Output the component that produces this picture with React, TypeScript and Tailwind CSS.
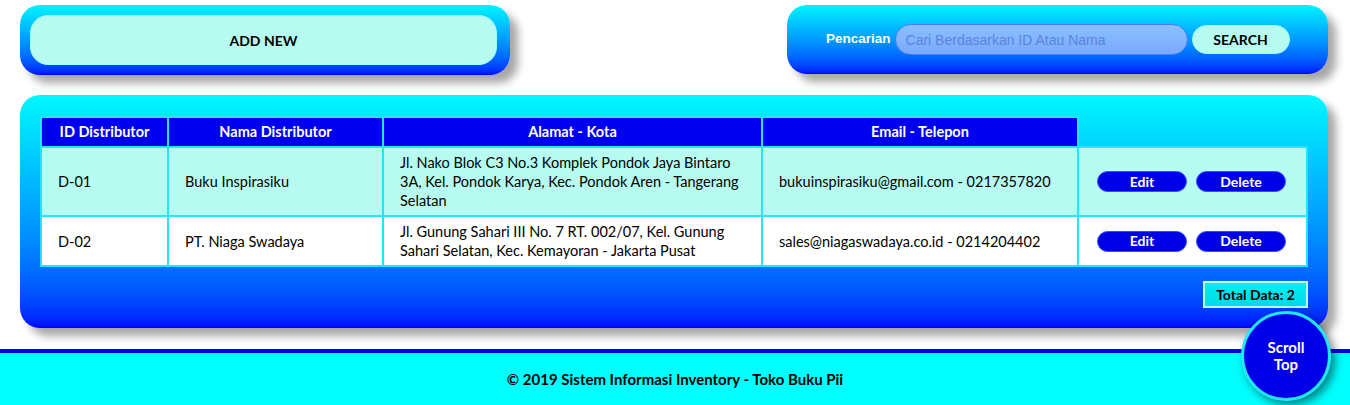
import React from "react";

interface Distributor {
  id: string;
  nama: string;
  alamat: string;
  kontak: string;
}

const rows: Distributor[] = [
  {
    id: "D-01",
    nama: "Buku Inspirasiku",
    alamat:
      "Jl. Nako Blok C3 No.3 Komplek Pondok Jaya Bintaro 3A, Kel. Pondok Karya, Kec. Pondok Aren - Tangerang Selatan",
    kontak: "bukuinspirasiku@gmail.com - 0217357820",
  },
  {
    id: "D-02",
    nama: "PT. Niaga Swadaya",
    alamat:
      "Jl. Gunung Sahari III No. 7 RT. 002/07, Kel. Gunung Sahari Selatan, Kec. Kemayoran - Jakarta Pusat",
    kontak: "sales@niagaswadaya.co.id - 0214204402",
  },
];

const calibri = "font-['Lato','Open_Sans',sans-serif]";
const arial = "font-['Liberation_Sans',Arial,sans-serif]";

export default function App() {
  return (
    <div className={`relative min-h-[405px] bg-white ${calibri} text-black`}>
      {/* Top bar */}
      <div className="flex items-start justify-between pl-5 pr-[22px] pt-[5px]">
        <div className="h-[70px] w-[490px] rounded-[20px] bg-gradient-to-b from-[#00f4ff] to-[#0000ff] py-[10px] pl-[10px] pr-[13px] shadow-[8px_8px_8px_rgba(0,0,0,0.35)]">
          <button className="flex h-full w-full items-center justify-center rounded-[18px] border border-[#9ff] bg-[#b6fcf1] text-[14px] font-bold">
            ADD NEW
          </button>
        </div>

        <div className="flex h-[69px] w-[541px] items-center rounded-[20px] bg-gradient-to-b from-[#00f4ff] to-[#0000ff] pl-[39px] shadow-[8px_8px_8px_rgba(0,0,0,0.35)]">
          <span className={`${arial} text-[13.5px] font-bold text-white`}>
            Pencarian
          </span>
          <input
            className={`${arial} ml-[4px] h-[31px] w-[293px] rounded-full border border-[#4a7cf5] bg-gradient-to-b from-[#8ac0ff] to-[#7aa8ff] px-[10px] text-[14px] outline-none placeholder:text-[#5b84d9]`}
            placeholder="Cari Berdasarkan ID Atau Nama"
          />
          <button className="ml-[4px] h-[29px] w-[98px] rounded-full border border-[#9ff] bg-[#b6fcf1] text-[14px] font-bold">
            SEARCH
          </button>
        </div>
      </div>

      {/* Main panel */}
      <div className="ml-5 mr-[22px] mt-5 rounded-[20px] bg-gradient-to-b from-[#00f8ff] via-[#0090ff] via-60% to-[#0000ff] px-5 pb-5 pt-[21px] shadow-[8px_8px_8px_rgba(0,0,0,0.35)]">
        <table className="w-full border-collapse text-[14.5px]">
          <thead>
            <tr className="h-[30px] text-white">
              <th className="w-[127px] border-2 border-[#22e6ff] bg-[#0000f0] font-bold">
                ID Distributor
              </th>
              <th className="w-[215px] border-2 border-[#22e6ff] bg-[#0000f0] font-bold">
                Nama Distributor
              </th>
              <th className="w-[379px] border-2 border-[#22e6ff] bg-[#0000f0] font-bold">
                Alamat - Kota
              </th>
              <th className="w-[316px] border-2 border-[#22e6ff] bg-[#0000f0] font-bold">
                Email - Telepon
              </th>
              <th className="border-b-2 border-[#22e6ff]"></th>
            </tr>
          </thead>
          <tbody>
            {rows.map((r, i) => (
              <tr
                key={r.id}
                className={i % 2 === 0 ? "bg-[#b6fcf1]" : "bg-white"}
              >
                <td className="border-2 border-[#22e6ff] px-4 py-[5px] leading-[19px]">
                  {r.id}
                </td>
                <td className="border-2 border-[#22e6ff] px-4 py-[5px] leading-[19px]">
                  {r.nama}
                </td>
                <td className="border-2 border-[#22e6ff] px-4 py-[5px] leading-[19px]">
                  {r.alamat}
                </td>
                <td className="border-2 border-[#22e6ff] px-4 py-[5px] leading-[19px]">
                  {r.kontak}
                </td>
                <td className="border-2 border-[#22e6ff] px-[18px] py-[5px]">
                  <div className="flex gap-[9px]">
                    <button className="h-[21px] w-[90px] rounded-full border border-[#3050ff] bg-[#0000e6] text-[14px] font-bold leading-none text-white">
                      Edit
                    </button>
                    <button className="h-[21px] w-[90px] rounded-full border border-[#3050ff] bg-[#0000e6] text-[14px] font-bold leading-none text-white">
                      Delete
                    </button>
                  </div>
                </td>
              </tr>
            ))}
          </tbody>
        </table>
        <div className="mt-[14px] flex justify-end">
          <div className="flex h-[27px] w-[105px] items-center justify-center border-2 border-[#b6fcf1] bg-gradient-to-b from-[#00f0f0] to-[#00d8e8] text-[14px] font-bold">
            Total Data: 2
          </div>
        </div>
      </div>

      {/* Footer */}
      <footer className="mt-[21px] flex h-[57px] items-center justify-center border-t-4 border-[#0000ff] bg-[#00ffff] text-[15px] font-bold">
        © 2019 Sistem Informasi Inventory - Toko Buku Pii
      </footer>

      <button className="absolute left-[1241px] top-[311px] flex h-[90px] w-[90px] items-center justify-center rounded-full border-[3px] border-[#22e6ff] bg-[#0000e6] text-[15px] font-bold leading-[17px] text-white shadow-[4px_4px_10px_rgba(0,0,0,0.5)]">
        Scroll
        <br />
        Top
      </button>
    </div>
  );
}
